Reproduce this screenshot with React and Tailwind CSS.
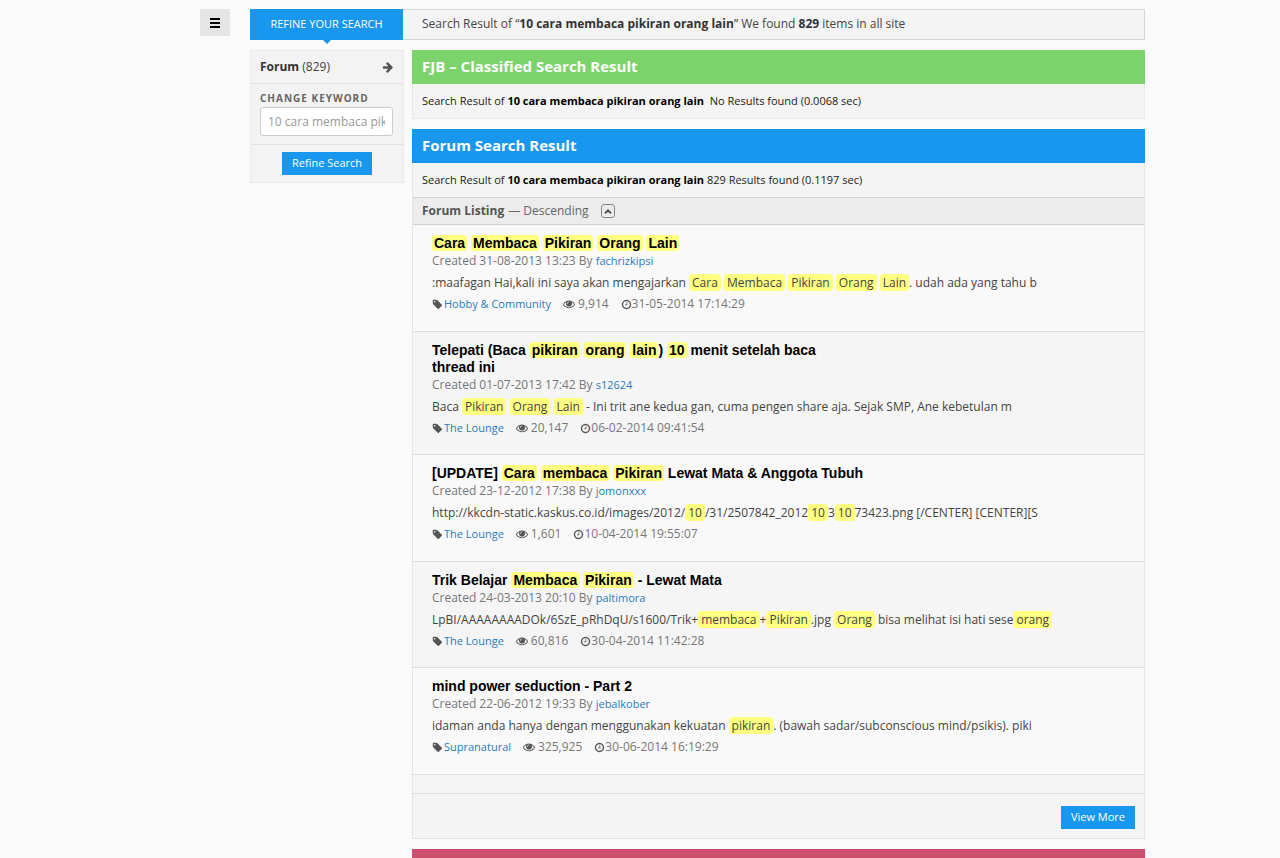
const TERM = "10 cara membaca pikiran orang lain";

const results = [
  {
    title: "{Cara} {Membaca} {Pikiran} {Orang} {Lain}",
    created: "31-08-2013 13:23",
    author: "fachrizkipsi",
    excerpt: ":maafagan Hai,kali ini saya akan mengajarkan {Cara} {Membaca} {Pikiran} {Orang} {Lain}. udah ada yang tahu b",
    forum: "Hobby & Community",
    views: "9,914",
    updated: "31-05-2014 17:14:29",
  },
  {
    title: "Telepati (Baca {pikiran} {orang} {lain}) {10} menit setelah baca thread\u00a0ini",
    created: "01-07-2013 17:42",
    author: "s12624",
    excerpt: "Baca {Pikiran} {Orang} {Lain} - Ini trit ane kedua gan, cuma pengen share aja. Sejak SMP, Ane kebetulan m",
    forum: "The Lounge",
    views: "20,147",
    updated: "06-02-2014 09:41:54",
  },
  {
    title: "[UPDATE] {Cara} {membaca} {Pikiran} Lewat Mata & Anggota Tubuh",
    created: "23-12-2012 17:38",
    author: "jomonxxx",
    excerpt: "http://kkcdn-static.kaskus.co.id/images/2012/{10}/31/2507842_2012{10}3{10}73423.png [/CENTER] [CENTER][S",
    forum: "The Lounge",
    views: "1,601",
    updated: "10-04-2014 19:55:07",
  },
  {
    title: "Trik Belajar {Membaca} {Pikiran} - Lewat Mata",
    created: "24-03-2013 20:10",
    author: "paltimora",
    excerpt: "LpBI/AAAAAAAADOk/6SzE_pRhDqU/s1600/Trik+{membaca}+{Pikiran}.jpg {Orang} bisa melihat isi hati sese{orang}",
    forum: "The Lounge",
    views: "60,816",
    updated: "30-04-2014 11:42:28",
  },
  {
    title: "mind power seduction - Part 2",
    created: "22-06-2012 19:33",
    author: "jebalkober",
    excerpt: "idaman anda hanya dengan menggunakan kekuatan {pikiran}. (bawah sadar/subconscious mind/psikis). piki",
    forum: "Supranatural",
    views: "325,925",
    updated: "30-06-2014 16:19:29",
  },
];

function Icon({ d, className }) {
  return (
    <svg viewBox="0 0 1792 1792" fill="currentColor" aria-hidden="true" className={className}>
      <path d={d} />
    </svg>
  );
}

const TAG = "M576 448q0-53-37.500-90.500t-90.500-37.500-90.500 37.500-37.500 90.500 37.500 90.500 90.500 37.500 90.500-37.500 37.500-90.500zM1643 1024q0 53-37 90l-491 492q-39 37-91 37-53 0-90-37l-715-716q-38-37-64.500-101t-26.500-117v-416q0-52 38-90t90-38h416q53 0 117 26.500t102 64.500l715 714q37 39 37 91z";
const EYE = "M1664 960q-152-236-381-353 61 104 61 225 0 185-131.500 316.500t-316.500 131.500-316.500-131.500-131.500-316.500q0-121 61-225-229 117-381 353 133 205 333.500 326.500t434.500 121.500 434.500-121.500 333.500-326.500zM944 576q0-20-14-34t-34-14q-125 0-214.500 89.500t-89.500 214.500q0 20 14 34t34 14 34-14 14-34q0-86 61-147t147-61q20 0 34-14t14-34zM1792 960q0 34-20 69-140 230-376.500 368.500t-499.500 138.500-499.500-139-376.500-368q-20-35-20-69t20-69q140-229 376.500-368t499.500-139 499.500 139 376.500 368q20 35 20 69z";
const CLOCK = "M1024 544v448q0 14-9 23t-23 9h-320q-14 0-23-9t-9-23v-64q0-14 9-23t23-9h224v-352q0-14 9-23t23-9h64q14 0 23 9t9 23zM1440 896q0-148-73-273t-198-198-273-73-273 73-198 198-73 273 73 273 198 198 273 73 273-73 198-198 73-273zM1664 896q0 209-103 385.500t-279.500 279.500-385.500 103-385.500-103-279.500-279.500-103-385.500 103-385.500 279.500-279.500 385.500-103 385.500 103 279.500 279.500 103 385.500z";
const ARROW = "M1600 960q0 54-37 91l-651 651q-39 37-91 37-51 0-90-37l-75-75q-38-38-38-91t38-91l293-293h-704q-52 0-84.500-37.500t-32.500-90.500v-128q0-53 32.500-90.500t84.500-37.500h704l-293-294q-38-36-38-90t38-90l75-75q38-38 90-38 53 0 91 38l651 651q37 35 37 90z";

// Words wrapped in braces are drawn as matched search terms.
function Highlighted({ text, pad }) {
  return text.split(/(\{[^}]*\})/).map((part, i) =>
    part.startsWith("{") ? (
      <mark key={i} className={`rounded-[3px] bg-[#ffff80] text-inherit ${pad}`}>
        {part.slice(1, -1)}
      </mark>
    ) : (
      part
    )
  );
}

function Result({ item }) {
  return (
    <li className="border-b border-[#dedede] bg-[#f9f9f9] px-[19px] pt-[10px] pb-[17px] even:bg-[#f5f5f5] even:pb-4">
      <h3 className="max-w-[440px] font-['Liberation_Sans',sans-serif] text-sm leading-[17px] font-bold text-black">
        <Highlighted text={item.title} pad="px-[2px]" />
      </h3>
      <p className="text-xs leading-[17px] text-[#777]">
        Created {item.created} By{" "}
        <a href="#author" className="text-[11px] text-[#2a7ac0]">{item.author}</a>
      </p>
      <p className="mt-1 text-xs leading-5 text-[#444]">
        <Highlighted text={item.excerpt} pad="px-[3px]" />
      </p>
      <div className="mt-px flex items-center gap-3 text-xs leading-5 text-[#777]">
        <span className="flex items-center gap-px">
          <Icon d={TAG} className="size-[11px] text-[#555]" />
          <a href="#forum" className="text-[11px] text-[#2a7ac0]">{item.forum}</a>
        </span>
        <span className="flex items-center gap-[3px]">
          <Icon d={EYE} className="size-3 text-[#555]" />
          {item.views}
        </span>
        <span className="flex items-center">
          <Icon d={CLOCK} className="size-[11px] text-[#555]" />
          {item.updated}
        </span>
      </div>
    </li>
  );
}

function Banner({ color, children }) {
  return (
    <h2 className={`h-[34px] px-[10px] text-[15px] leading-8 font-bold text-white ${color}`}>{children}</h2>
  );
}

export default function App() {
  return (
    <div className="flex h-screen items-start overflow-hidden bg-[#fafafa] pt-[9px] pr-[135px] pl-[200px] font-['Open_Sans',sans-serif] text-[#444]">
      <button type="button" aria-label="Menu" className="mr-5 flex h-[27px] w-[30px] shrink-0 items-center justify-center bg-[#e5e5e5] text-black">
        <svg viewBox="0 0 10 10" fill="currentColor" className="size-[10px]" aria-hidden="true">
          <path d="M0 0h10v2H0zM0 4h10v2H0zM0 8h10v2H0z" />
        </svg>
      </button>

      <div className="min-w-0 flex-1">
        <header className="flex h-[31px] border border-l-0 border-[#d6d6d6] bg-[#f4f4f4]">
          <div className="relative -my-px h-[31px] w-[153px] shrink-0 bg-[#1797ee] text-center text-[11px] leading-[30px] text-white">
            REFINE YOUR SEARCH
            <svg viewBox="0 0 10 5" className="absolute top-[30px] left-[72px] h-[5px] w-[10px]" aria-hidden="true">
              <path d="M0 0h10L5 5z" fill="#1797ee" />
            </svg>
          </div>
          <p className="flex-1 pl-[19px] text-xs leading-7">
            Search Result of “<b className="text-[#333]">{TERM}</b>” We found <b className="text-[#333]">829</b> items in all site
          </p>
        </header>

        <div className="mt-[10px] flex items-start gap-2">
          <aside className="w-[154px] shrink-0 border border-[#e9e9e9] bg-[#f3f3f3]">
            <a href="#results" className="flex h-[33px] items-center justify-between border-b border-[#e2e2e2] px-[9px] text-xs">
              <span><b className="text-[#333]">Forum</b> (829)</span>
              <Icon d={ARROW} className="size-3 text-[#555]" />
            </a>
            <form onSubmit={(e) => e.preventDefault()}>
              <div className="border-b border-[#e2e2e2] px-[9px] pt-[5px] pb-2">
                <label htmlFor="keyword" className="block text-[10px] leading-[18px] font-bold tracking-[1px] text-[#666]">CHANGE KEYWORD</label>
                <input id="keyword" type="text" placeholder={TERM} className="block h-[29px] w-[133px] rounded-[3px] border border-[#ccc] bg-white px-[7px] text-xs text-[#444] placeholder:text-[#999]" />
              </div>
              <div className="flex justify-center px-[9px] py-[7px]">
                <button type="submit" className="h-[23px] bg-[#1797ee] px-[10px] text-[11px] text-white">Refine Search</button>
              </div>
            </form>
          </aside>

          <main className="min-w-0 flex-1">
            <section className="mb-[10px]">
              <Banner color="bg-[#7cd36b]">FJB – Classified Search Result</Banner>
              <p className="h-[35px] border border-t-0 border-[#e9e9e9] bg-[#f4f4f4] px-[9px] text-[11px] leading-[34px] whitespace-pre text-[#222]">
                Search Result of <b className="text-black">{TERM}</b>{"  "}No Results found (0.0068 sec)
              </p>
            </section>

            <section className="mb-[10px]">
              <Banner color="bg-[#1797ee]">Forum Search Result</Banner>
              <div className="border border-t-0 border-[#e4e4e4] bg-[#f4f4f4]">
                <p className="h-[34px] px-[9px] text-[11px] leading-[34px] text-[#222]">
                  Search Result of <b className="text-black">{TERM}</b> 829 Results found (0.1197 sec)
                </p>
                <div className="flex h-7 items-center border-y border-[#d2d2d2] bg-[#ececec] px-[9px] text-xs text-[#666]">
                  <b className="mr-1 text-[#555]">Forum Listing</b>— Descending
                  <button type="button" aria-label="Toggle sort order" className="ml-3 flex size-[14px] items-center justify-center rounded-[3px] border border-[#888]">
                    <svg viewBox="0 0 8 5" fill="none" stroke="#555" strokeWidth="2" className="h-[5px] w-2" aria-hidden="true">
                      <path d="M1 4.200 4 1.400l3 2.800" />
                    </svg>
                  </button>
                </div>
                <ul>
                  {results.map((item) => (
                    <Result key={item.author} item={item} />
                  ))}
                </ul>
                <div className="h-[19px] border-b border-[#dedede] bg-[#f5f5f5]" />
                <div className="flex justify-end px-[9px] pt-3 pb-[9px]">
                  <button type="button" className="h-[23px] bg-[#1797ee] px-[10px] text-[11px] text-white">View More</button>
                </div>
              </div>
            </section>

            <div className="h-[34px] bg-[#cd4f6e]" />
          </main>
        </div>
      </div>
    </div>
  );
}
